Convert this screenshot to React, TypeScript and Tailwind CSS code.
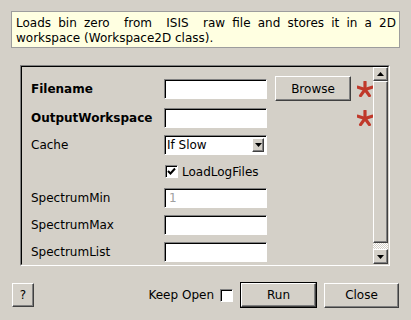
import React from 'react'

const raised =
  'border border-t-white border-l-white border-r-[#404040] border-b-[#404040] shadow-[inset_-1px_-1px_0_#808080] bg-[#d4d0c8]'
const sunken =
  'border border-t-[#808080] border-l-[#808080] border-b-white border-r-white shadow-[inset_1px_1px_0_#000] bg-white'

function Asterisk() {
  const arms = [-90, -18, 54, 126, 198]
  return (
    <svg width="16" height="16" viewBox="0 0 16 16" className="block">
      {arms.map((a) => {
        const r = (a * Math.PI) / 180
        return (
          <line
            key={a}
            x1="8"
            y1="8.5"
            x2={8 + Math.cos(r) * 7.5}
            y2={8.5 + Math.sin(r) * 7.5}
            stroke="#c0392b"
            strokeWidth="3.2"
            strokeLinecap="round"
          />
        )
      })}
    </svg>
  )
}

function Check({ checked }: { checked?: boolean }) {
  return (
    <div className={`w-[13px] h-[13px] ${sunken} flex items-center justify-center`}>
      {checked && (
        <svg width="9" height="9" viewBox="0 0 9 9">
          <path d="M1 4 L3.5 6.5 L8 1.5" fill="none" stroke="#000" strokeWidth="2" />
        </svg>
      )}
    </div>
  )
}

function Input({ value, disabled }: { value?: string; disabled?: boolean }) {
  return (
    <div className={`w-[103px] h-[20px] ${sunken} flex items-center pl-[4px] ${disabled ? 'text-[#a0a0a0]' : ''}`}>
      {value}
    </div>
  )
}

function Arrow({ down }: { down?: boolean }) {
  return (
    <svg width="7" height="4" viewBox="0 0 7 4">
      <path d={down ? 'M0 0 H7 L3.5 4 Z' : 'M0 4 H7 L3.5 0 Z'} fill="#000" />
    </svg>
  )
}

function Row({ label, bold, children, h = 'h-[20px]' }: { label?: string; bold?: boolean; children?: React.ReactNode; h?: string }) {
  return (
    <div className={`flex items-center ${h}`}>
      <div className={`w-[133px] ${bold ? 'font-bold' : ''}`}>{label}</div>
      {children}
    </div>
  )
}

export default function App() {
  return (
    <div className="w-[411px] h-[320px] bg-[#d4d0c8] overflow-hidden font-['DejaVu_Sans',sans-serif] text-[12px] text-black flex flex-col">
      {/* description */}
      <div className="mt-[11px] ml-[11px] w-[389px] h-[37px] border border-[#9d9d9d] bg-[#ffffe1] pl-[4px] pr-[3px] pt-[4px] leading-[15px] whitespace-pre-wrap text-justify">
        {'Loads bin zero  from  ISIS  raw file and stores it in a 2D workspace (Workspace2D class).'}
      </div>

      {/* property frame */}
      <div className="mt-[17px] ml-[20px] w-[370px] h-[201px] border border-t-[#808080] border-l-[#808080] border-b-white border-r-white">
        <div className="w-full h-full border border-t-[#000] border-l-[#000] border-b-[#d4d0c8] border-r-[#d4d0c8] flex overflow-hidden">
          <div className="flex-1 pl-[9px] pt-[9px] flex flex-col gap-[7px]">
            <Row label="Filename" bold h="h-[25px]">
              <Input />
              <button className={`ml-[8px] w-[76px] h-[25px] ${raised}`}>Browse</button>
              <div className="ml-[6px]">
                <Asterisk />
              </div>
            </Row>
            <Row label="OutputWorkspace" bold>
              <Input />
              <div className="ml-[90px]">
                <Asterisk />
              </div>
            </Row>
            <Row label="Cache">
              <div className={`w-[103px] h-[20px] ${sunken} flex items-center justify-between pl-[2px] pr-[2px]`}>
                <span>If Slow</span>
                <div className={`w-[12px] h-[14px] ${raised} flex items-center justify-center`}>
                  <Arrow down />
                </div>
              </div>
            </Row>
            <Row h="h-[19px]">
              <div className="ml-[1px]">
                <Check checked />
              </div>
              <span className="ml-[4px]">LoadLogFiles</span>
            </Row>
            <Row label="SpectrumMin">
              <Input value="1" disabled />
            </Row>
            <Row label="SpectrumMax">
              <Input />
            </Row>
            <Row label="SpectrumList">
              <Input />
            </Row>
          </div>

          {/* scrollbar */}
          <div className="w-[15px] flex flex-col">
            <div className={`h-[14px] ${raised} flex items-center justify-center`}>
              <Arrow />
            </div>
            <div className={`flex-1 ${raised}`} />
            <div className="h-[6px] bg-[repeating-conic-gradient(#ffffff_0%_25%,#d4d0c8_0%_50%)] bg-[length:2px_2px]" />
            <div className={`h-[15px] ${raised} flex items-center justify-center`}>
              <Arrow down />
            </div>
          </div>
        </div>
      </div>

      {/* bottom buttons */}
      <div className="mt-[16px] px-[12px] flex items-center h-[26px]">
        <button className={`w-[22px] h-[24px] ${raised}`}>?</button>
        <div className="flex-1" />
        <span>Keep Open</span>
        <div className="ml-[6px]">
          <Check />
        </div>
        <div className="ml-[7px] w-[77px] h-[26px] border border-black">
          <button className={`w-full h-full ${raised}`}>Run</button>
        </div>
        <button className={`ml-[7px] w-[75px] h-[25px] ${raised}`}>Close</button>
      </div>
    </div>
  )
}
